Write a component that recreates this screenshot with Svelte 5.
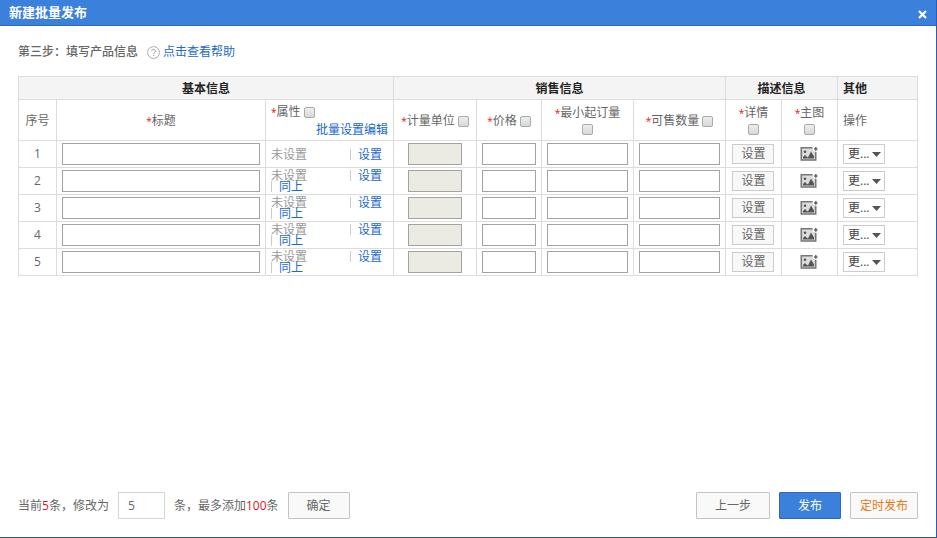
<script lang="ts">
  let count = $state('5');
  const rows = [1, 2, 3, 4, 5];
</script>

<div class="dialog">
  <header class="title-bar">
    <h1>新建批量发布</h1>
    <button class="close" type="button" aria-label="关闭">
      <svg width="9" height="9" viewBox="0 0 9 9" aria-hidden="true">
        <path d="M1 1l7 7M8 1l-7 7" stroke="#fff" stroke-width="2.2" />
      </svg>
    </button>
  </header>

  <main>
    <div class="step">
      <h2>第三步：填写产品信息</h2>
      <svg class="help-icon" width="13" height="13" viewBox="0 0 13 13" fill="none" aria-hidden="true">
        <circle cx="6.5" cy="6.5" r="5.9" stroke="#aaa" />
        <path d="M4.7 5.2c0-2.4 3.7-2.3 3.7-.1 0 1.3-1.8 1.4-1.8 2.8M6.6 8.9v1.2" stroke="#999" />
      </svg>
      <a href="#help">点击查看帮助</a>
    </div>

    <table>
      <colgroup>
        <col class="col-index" />
        <col />
        <col class="col-attr" />
        <col class="col-unit" />
        <col class="col-price" />
        <col class="col-amount" />
        <col class="col-amount" />
        <col class="col-desc" />
        <col class="col-desc" />
        <col class="col-action" />
      </colgroup>
      <thead>
        <tr class="groups">
          <th colspan="3">基本信息</th>
          <th colspan="4">销售信息</th>
          <th colspan="2">描述信息</th>
          <th class="left">其他</th>
        </tr>
        <tr class="fields">
          <th>序号</th>
          <th><i>*</i>标题</th>
          <th class="attr-head">
            <label><span><i>*</i>属性</span><input type="checkbox" /></label>
            <a href="#batch">批量设置编辑</a>
          </th>
          <th><label><span><i>*</i>计量单位</span><input type="checkbox" /></label></th>
          <th><label><span><i>*</i>价格</span><input type="checkbox" /></label></th>
          <th><label class="stacked"><span><i>*</i>最小起订量</span><input type="checkbox" /></label></th>
          <th><label><span><i>*</i>可售数量</span><input type="checkbox" /></label></th>
          <th><label class="stacked"><span><i>*</i>详情</span><input type="checkbox" /></label></th>
          <th><label class="stacked"><span><i>*</i>主图</span><input type="checkbox" /></label></th>
          <th class="left">操作</th>
        </tr>
      </thead>
      <tbody>
        {#each rows as row}
          <tr>
            <td>{row}</td>
            <td><input class="field" type="text" aria-label="标题 {row}" /></td>
            <td>
              <div class="attr-line">
                <span>未设置</span>
                <a class="divided" href="#set-{row}">设置</a>
              </div>
              {#if row > 1}
                <div class="attr-line">
                  <a class="divided" href="#same-{row}">同上</a>
                </div>
              {/if}
            </td>
            <td><input class="field unit" type="text" disabled aria-label="计量单位 {row}" /></td>
            <td><input class="field" type="text" aria-label="价格 {row}" /></td>
            <td><input class="field" type="text" aria-label="最小起订量 {row}" /></td>
            <td><input class="field" type="text" aria-label="可售数量 {row}" /></td>
            <td><button class="set" type="button">设置</button></td>
            <td>
              <button class="picture" type="button" aria-label="主图 {row}">
                <svg width="18" height="16" viewBox="0 0 18 16" aria-hidden="true">
                  <path d="M1 1.500h12V5h3v9.500H1z" fill="#ddd" />
                  <path d="M12.500 1.800H1.300V14h14.400V6" fill="none" stroke="#777" stroke-width="1.600" />
                  <path d="M3 12.500v-1.500l2-2 2 2 1 .5 3-6 3 5v2z" fill="#555" />
                  <circle cx="5" cy="5.800" r="1.300" fill="#555" />
                  <path d="M14 3h3.500M15.800 1v3.800" stroke="#666" stroke-width="1.500" />
                </svg>
              </button>
            </td>
            <td class="left">
              <div class="more">
                <select aria-label="操作 {row}">
                  <option>更...</option>
                </select>
                <svg width="9" height="5" viewBox="0 0 9 5" aria-hidden="true">
                  <path d="M0 0h9L4.500 5z" fill="#555" />
                </svg>
              </div>
            </td>
          </tr>
        {/each}
      </tbody>
    </table>
  </main>

  <footer>
    <label for="count">当前<b>5</b>条，修改为</label>
    <input id="count" class="count" type="text" bind:value={count} />
    <span>条，最多添加<b>100</b>条</span>
    <button class="btn confirm" type="button">确定</button>
    <div class="actions">
      <button class="btn prev" type="button">上一步</button>
      <button class="btn primary" type="button">发布</button>
      <button class="btn timed" type="button">定时发布</button>
    </div>
  </footer>
</div>

<style>
  :global(body) {
    background: #fff;
  }

  .dialog,
  .dialog * {
    box-sizing: border-box;
  }

  .dialog {
    display: flex;
    flex-direction: column;
    min-height: 100vh;
    border-right: 1px solid #2c5cab;
    border-bottom: 1px solid #2f5878;
    color: #666;
    font: 12px/18px 'Open Sans', 'Noto Sans CJK SC', sans-serif;
  }

  button,
  input,
  select {
    margin: 0;
    padding: 0;
    color: inherit;
    font: inherit;
  }

  svg {
    display: block;
  }

  a {
    color: #1c6ac9;
    text-decoration: none;
  }

  .title-bar {
    display: flex;
    align-items: center;
    justify-content: space-between;
    height: 26px;
    padding: 0 9px 2px;
    border-bottom: 1px solid #2c69bb;
    background: #3b80da;
  }

  h1 {
    margin: 0;
    color: #fff;
    font-size: 13px;
    line-height: 18px;
  }

  .close {
    padding-top: 5px;
    border: 0;
    background: none;
  }

  main {
    flex: 1;
    padding: 16px 18px 0;
  }

  .step {
    display: flex;
    align-items: center;
    height: 20px;
    margin-bottom: 14px;
  }

  h2 {
    margin: 0;
    color: #666;
    font-size: 12px;
    font-weight: 500;
  }

  .help-icon {
    margin: 0 3px 0 9px;
  }

  table {
    width: 100%;
    border-collapse: collapse;
    table-layout: fixed;
  }

  .col-index {
    width: 38px;
  }

  .col-attr {
    width: 128px;
  }

  .col-unit {
    width: 83px;
  }

  .col-price {
    width: 65px;
  }

  .col-amount {
    width: 92px;
  }

  .col-desc {
    width: 56px;
  }

  .col-action {
    width: 80px;
  }

  th,
  td {
    height: 27px;
    padding: 0 5px;
    border: 1px solid #dcdcdc;
    text-align: center;
    font-weight: normal;
  }

  .left {
    text-align: left;
  }

  .groups th {
    height: 23px;
    padding-top: 2px;
    background: #f4f4f4;
    color: #222;
    font-weight: bold;
  }

  .fields th {
    height: 41px;
    padding-top: 2px;
    white-space: nowrap;
  }

  i,
  b {
    color: #e0141c;
    font-style: normal;
    font-weight: normal;
  }

  i {
    font-size: 10px;
  }

  label {
    display: flex;
    align-items: center;
    justify-content: center;
    gap: 3px;
  }

  .stacked {
    flex-direction: column;
    gap: 2px;
  }

  .fields .stacked {
    margin-top: -4px;
  }

  .attr-head label {
    justify-content: flex-start;
  }

  .attr-head a {
    display: block;
    text-align: right;
  }

  input[type='checkbox'] {
    appearance: none;
    flex: none;
    width: 11px;
    height: 11px;
    border: 1px solid #aaa;
    border-radius: 2px;
    background: linear-gradient(#eee, #d8d8d8);
  }

  .field {
    display: block;
    width: 100%;
    height: 22px;
    border: 1px solid #a3a3a3;
    background: #fff;
  }

  .unit {
    width: 54px;
    margin: 0 auto;
    background: #ebebe4;
  }

  .attr-line {
    display: flex;
    justify-content: space-between;
    padding-right: 6px;
    color: #999;
    line-height: 11px;
  }

  .divided {
    padding-left: 7px;
    border-left: 1px solid #ccc;
  }

  .set {
    width: 42px;
    height: 20px;
    border: 1px solid #ccc;
    background: #f8f8f8;
  }

  .picture {
    display: block;
    margin: 0 auto;
    border: 0;
    background: none;
  }

  .more {
    display: grid;
    align-items: center;
    width: 42px;
  }

  .more select,
  .more svg {
    grid-area: 1 / 1;
  }

  .more select {
    appearance: none;
    height: 20px;
    padding-left: 4px;
    border: 1px solid #ccc;
    border-radius: 0;
    background: #fff;
    color: #444;
  }

  .more svg {
    justify-self: end;
    margin-right: 4px;
    pointer-events: none;
  }

  footer {
    display: flex;
    align-items: center;
    padding: 0 18px 18px;
  }

  footer label {
    display: block;
  }

  .count {
    width: 47px;
    height: 27px;
    margin: 0 9px;
    padding: 0 9px;
    border: 1px solid #d5d5d5;
  }

  .btn {
    height: 27px;
    border: 1px solid #c4c4c4;
    border-radius: 1px;
    background: #f9f9f9;
  }

  .confirm {
    width: 62px;
    margin-left: 9px;
  }

  .actions {
    display: flex;
    gap: 9px;
    margin-left: auto;
  }

  .prev {
    width: 74px;
  }

  .primary {
    width: 62px;
    border-color: #2c69bb;
    background: #3b80da;
    color: #fff;
  }

  .timed {
    width: 68px;
    color: #e67817;
  }
</style>
